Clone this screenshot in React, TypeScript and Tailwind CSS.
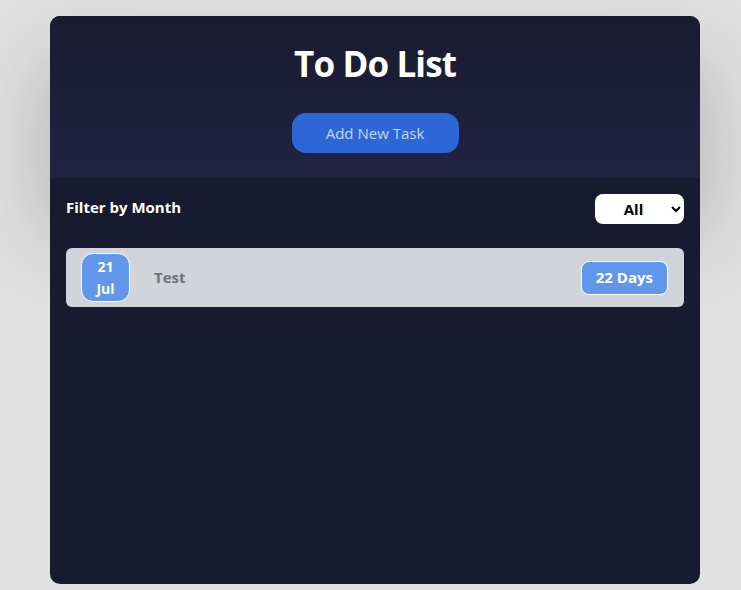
import { type FC } from 'react';

interface ITask {
  id: number;
  day: number;
  month: string;
  title: string;
  daysLeft: number;
}

const TASKS: ITask[] = [{ id: 1, day: 21, month: 'Jul', title: 'Test', daysLeft: 22 }];

const FONT = { fontFamily: '"Open Sans", "Noto Sans", sans-serif' };

const TaskRow: FC<{ task: ITask }> = ({ task }) => (
  <li className="flex items-center h-[59px] pl-[15px] pr-[16px] bg-[#d1d5db] rounded-md">
    <div className="w-[49px] h-[49px] flex flex-col items-center justify-center rounded-xl border border-white bg-[#6097ea] text-white font-bold text-[14px] leading-[22px]">
      <span>{task.day}</span>
      <span>{task.month}</span>
    </div>
    <span className="ml-[24px] text-[15px] font-bold text-[#6b7280]">{task.title}</span>
    <span className="ml-auto h-[34px] px-[14px] flex items-center rounded-lg border border-white bg-[#6097ea] text-white font-bold text-[15px]">
      {task.daysLeft} Days
    </span>
  </li>
);

const App: FC = () => (
  <div className="min-h-screen bg-[#e0e0e0] pt-[16px] pb-[6px]" style={FONT}>
    <div className="ml-[50px] w-[650px] h-[568px] rounded-[10px] bg-[#181b2f]">
      <header className="h-[162px] flex flex-col items-center rounded-t-[10px] bg-gradient-to-b from-[#191b31] to-[#212241] pt-[24px] shadow-[0_50px_80px_10px_rgba(0,0,0,0.18)]">
        <h1 className="text-[35px] font-bold text-white tracking-tight leading-[48px]">To Do List</h1>
        <button className="mt-[25px] w-[167px] h-[40px] rounded-[14px] bg-[#2d67d6] text-[#c9d5f2] text-[15px]">
          Add New Task
        </button>
      </header>

      <section className="px-[16px] bg-[#181b2f] pb-[20px]">
        <div className="flex items-center justify-between pt-[16px]">
          <span className="text-white font-bold text-[15px] -mt-[4px]">Filter by Month</span>
          <select className="w-[89px] h-[30px] rounded-lg bg-white text-black font-bold text-[15px] text-center">
            <option>All</option>
          </select>
        </div>

        <ul className="mt-[24px] flex flex-col gap-2">
          {TASKS.map((task) => (
            <TaskRow key={task.id} task={task} />
          ))}
        </ul>
      </section>
    </div>
  </div>
);

export default App;
